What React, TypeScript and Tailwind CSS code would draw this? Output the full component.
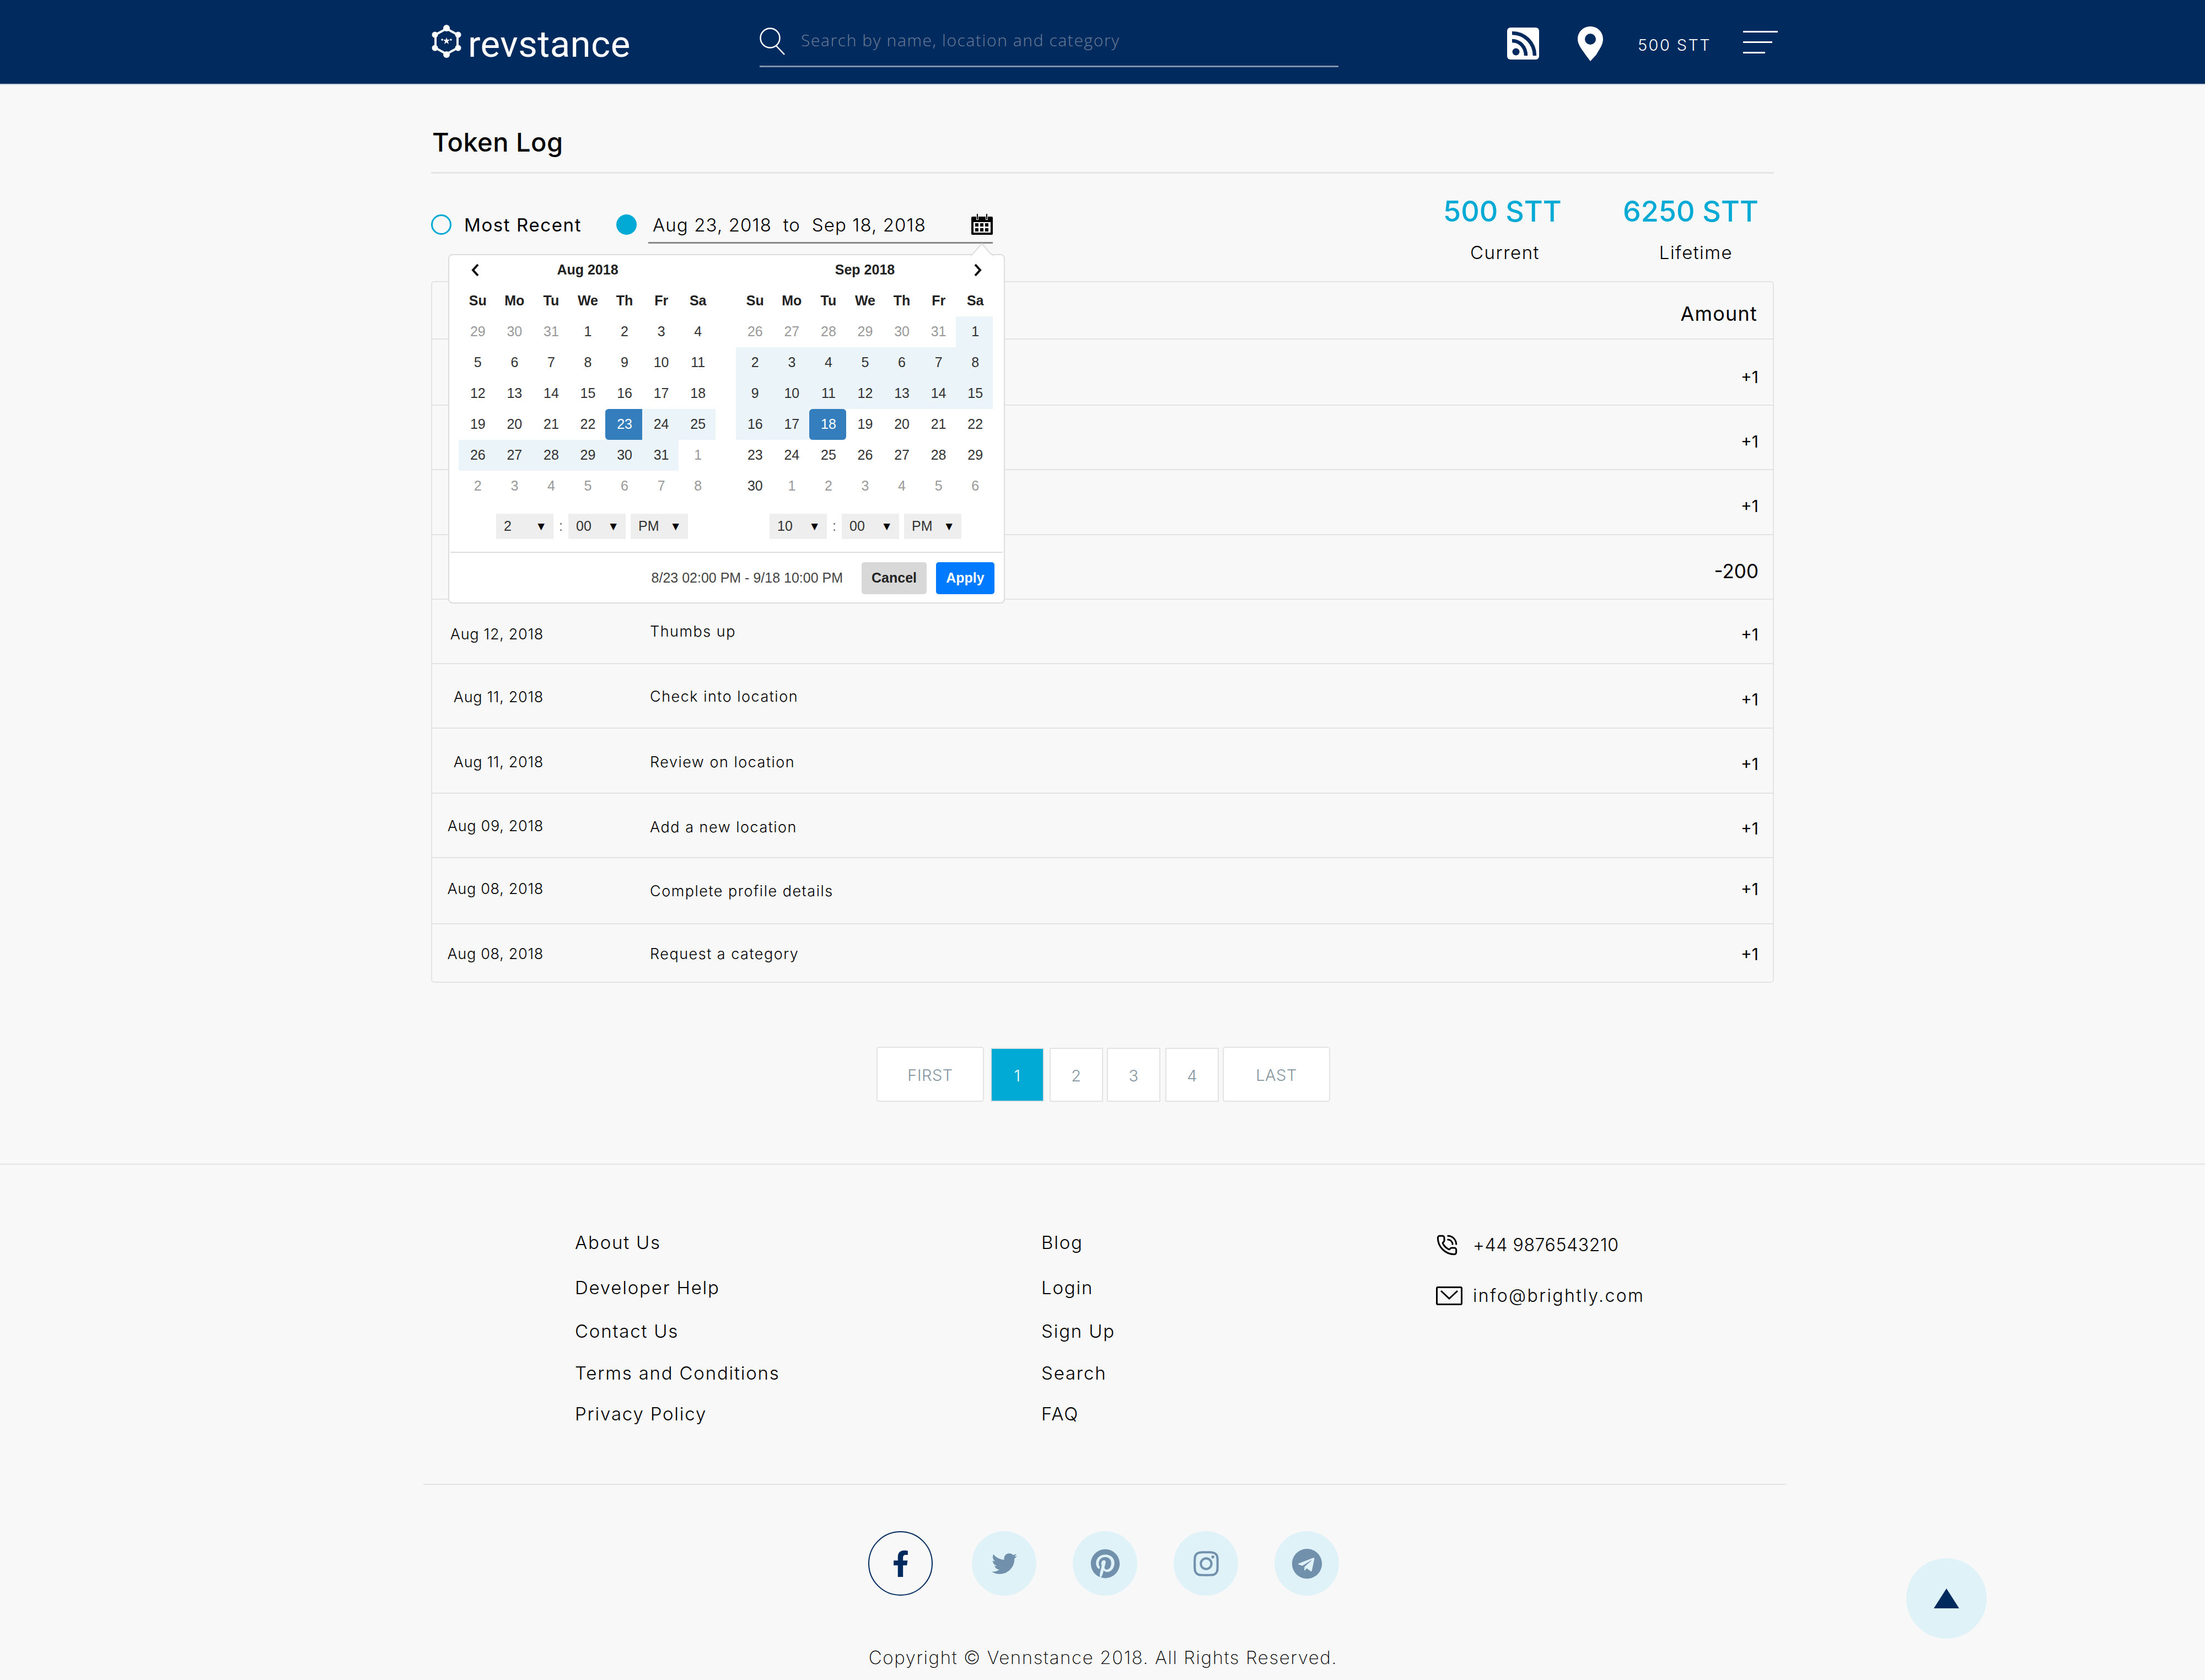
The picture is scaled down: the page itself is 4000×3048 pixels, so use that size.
import React from "react";
import { FaFacebookF, FaTwitter, FaPinterest, FaInstagram, FaTelegram } from "react-icons/fa";
import { PhoneCall } from "lucide-react";

const augDays = [
  [29, 30, 31, 1, 2, 3, 4],
  [5, 6, 7, 8, 9, 10, 11],
  [12, 13, 14, 15, 16, 17, 18],
  [19, 20, 21, 22, 23, 24, 25],
  [26, 27, 28, 29, 30, 31, 1],
  [2, 3, 4, 5, 6, 7, 8],
];

const sepDays = [
  [26, 27, 28, 29, 30, 31, 1],
  [2, 3, 4, 5, 6, 7, 8],
  [9, 10, 11, 12, 13, 14, 15],
  [16, 17, 18, 19, 20, 21, 22],
  [23, 24, 25, 26, 27, 28, 29],
  [30, 1, 2, 3, 4, 5, 6],
];

const weekDays = ["Su", "Mo", "Tu", "We", "Th", "Fr", "Sa"];

const rows = [
  { h: "h-[120px]", date: "", desc: "", amount: "+1", amountClass: "pt-[48px]" },
  { h: "h-[117px]", date: "", desc: "", amount: "+1", amountClass: "pt-[45px]" },
  { h: "h-[118px]", date: "", desc: "", amount: "+1", amountClass: "pt-[45px]" },
  { h: "h-[117px]", date: "", desc: "", amount: "-200", amountClass: "pt-[45px] text-[35px]" },
  { h: "h-[117px]", date: "Aug 12, 2018", dateClass: "pt-[43px]", desc: "Thumbs up", descClass: "pt-[38px]", amount: "+1", amountClass: "pt-[43px]" },
  { h: "h-[117px]", date: "Aug 11, 2018", dateClass: "pt-[40px]", desc: "Check into location", descClass: "pt-[39px]", amount: "+1", amountClass: "pt-[44px]" },
  { h: "h-[118px]", date: "Aug 11, 2018", dateClass: "pt-[41px]", desc: "Review on location", descClass: "pt-[41px]", amount: "+1", amountClass: "pt-[44px]" },
  { h: "h-[117px]", date: "Aug 09, 2018", dateClass: "pt-[39px]", desc: "Add a new location", descClass: "pt-[41px]", amount: "+1", amountClass: "pt-[43px]" },
  { h: "h-[120px]", date: "Aug 08, 2018", dateClass: "pt-[36px]", desc: "Complete profile details", descClass: "pt-[40px]", amount: "+1", amountClass: "pt-[36px]" },
  { h: "h-[106px]", date: "Aug 08, 2018", dateClass: "pt-[34px]", desc: "Request a category", descClass: "pt-[34px]", amount: "+1", amountClass: "pt-[34px]" },
];

const footerLeft = [
  { label: "About Us", h: "h-[82px]" },
  { label: "Developer Help", h: "h-[79px]" },
  { label: "Contact Us", h: "h-[76px]" },
  { label: "Terms and Conditions", h: "h-[74px]" },
  { label: "Privacy Policy", h: "h-[74px]" },
];

const footerRight = [
  { label: "Blog", h: "h-[82px]" },
  { label: "Login", h: "h-[79px]" },
  { label: "Sign Up", h: "h-[76px]" },
  { label: "Search", h: "h-[74px]" },
  { label: "FAQ", h: "h-[74px]" },
];

const Logo = () => (
  <svg width="54" height="60" viewBox="0 0 54 60" className="shrink-0">
    <polygon points="27,7 47,18 47,42 27,53 7,42 7,18" fill="none" stroke="#fff" strokeWidth="4" />
    <circle cx="27" cy="6" r="6" fill="#fff" />
    <circle cx="27" cy="54" r="6" fill="#fff" />
    <circle cx="6" cy="18" r="5.5" fill="#fff" />
    <circle cx="48" cy="18" r="5.5" fill="#fff" />
    <circle cx="6" cy="42" r="5.5" fill="#fff" />
    <circle cx="48" cy="42" r="5.5" fill="#fff" />
    <polygon points="27,23 28.5,27 33,27 29.5,30 31,35 27,32 23,35 24.5,30 21,27 25.5,27" fill="#fff" />
    <circle cx="19" cy="27" r="1.8" fill="#fff" />
    <circle cx="35" cy="27" r="1.8" fill="#fff" />
  </svg>
);

const RssIcon = () => (
  <svg width="58" height="58" viewBox="0 0 58 58">
    <rect width="58" height="58" rx="6" fill="#fff" />
    <circle cx="16" cy="44" r="6.5" fill="#012a5e" />
    <path d="M9 24c14 0 25 11 25 27" fill="none" stroke="#012a5e" strokeWidth="6.5" />
    <path d="M9 10c23 0 41 18 41 41" fill="none" stroke="#012a5e" strokeWidth="6.5" />
  </svg>
);

const PinIcon = () => (
  <svg width="46" height="63" viewBox="0 0 46 63">
    <path
      fillRule="evenodd"
      d="M23 0c13 0 23 10 23 23 0 10-7 19-12 28L23 63 14 51C8 42 0 33 0 23 0 10 10 0 23 0zm0 13a10 10 0 1 0 0 20 10 10 0 0 0 0-20z"
      fill="#fff"
    />
  </svg>
);

const CalendarIcon = () => (
  <svg width="39" height="38" viewBox="0 0 39 38">
    <rect x="0" y="5" width="39" height="33" rx="2" fill="#000" />
    <rect x="9" y="0" width="4" height="11" fill="#f8f8f8" />
    <rect x="26" y="0" width="4" height="11" fill="#f8f8f8" />
    <rect x="10" y="0" width="2" height="10" fill="#000" />
    <rect x="27" y="0" width="2" height="10" fill="#000" />
    <rect x="4" y="15" width="31" height="19" fill="#fff" />
    <rect x="7" y="17" width="6" height="6" fill="#000" />
    <rect x="16" y="17" width="6" height="6" fill="#000" />
    <rect x="25" y="17" width="6" height="6" fill="#000" />
    <rect x="7" y="26" width="6" height="6" fill="#000" />
    <rect x="16" y="26" width="6" height="6" fill="#000" />
    <rect x="25" y="26" width="6" height="6" fill="#000" />
  </svg>
);

const MailIcon = () => (
  <svg width="48" height="34" viewBox="0 0 48 34">
    <rect x="1.5" y="1.5" width="45" height="31" rx="2" fill="none" stroke="#000" strokeWidth="3" />
    <path d="M9 8l15 14L39 8" fill="none" stroke="#000" strokeWidth="3" />
  </svg>
);

const Calendar: React.FC<{
  days: number[][];
  isOff: (row: number, col: number) => boolean;
  isRange: (row: number, col: number) => boolean;
  activeCell: [number, number];
  activeClass: string;
}> = ({ days, isOff, isRange, activeCell, activeClass }) => (
  <div className="w-[466px]">
    <div className="grid grid-cols-7 h-[56px] items-center text-center font-bold text-[25px] text-[#222]">
      {weekDays.map((d) => (
        <div key={d} className="pl-[3px]">{d}</div>
      ))}
    </div>
    {days.map((week, r) => (
      <div key={r} className="grid grid-cols-7 h-[56px] text-center text-[25px]">
        {week.map((day, c) => {
          const active = activeCell[0] === r && activeCell[1] === c;
          let cls = "text-[#333]";
          if (isOff(r, c)) cls = "text-[#999]";
          if (isRange(r, c)) cls = "bg-[#ebf4f8] text-[#333]";
          if (active) cls = `bg-[#357ebd] text-white ${activeClass}`;
          return (
            <div key={c} className={`flex items-center justify-center pl-[3px] ${cls}`}>
              {day}
            </div>
          );
        })}
      </div>
    ))}
  </div>
);

const TimeSelect: React.FC<{ value: string }> = ({ value }) => (
  <div className="w-[104px] h-[46px] bg-[#eee] flex items-center justify-between pl-[14px] pr-[12px] text-[25px] text-[#333]">
    <span>{value}</span>
    <span className="text-[21px] text-black">▼</span>
  </div>
);

const TimePicker: React.FC<{ hour: string }> = ({ hour }) => (
  <div className="flex items-center">
    <TimeSelect value={hour} />
    <span className="w-[27px] text-center text-[25px] text-[#666]">:</span>
    <TimeSelect value="00" />
    <div className="w-[9px]" />
    <TimeSelect value="PM" />
  </div>
);

const DatePopup = () => (
  <div
    className="absolute left-[31px] top-[146px] w-[1010px] h-[634px] bg-white border-2 border-[#ddd] rounded-[8px] z-10 text-[#333]"
    style={{ fontFamily: '"Liberation Sans", Arial, sans-serif' }}
  >
    <svg width="44" height="24" viewBox="0 0 44 24" className="absolute right-[18px] -top-[22px]">
      <path d="M2 24L22 1l20 23" fill="#fff" stroke="#ddd" strokeWidth="2" />
      <rect x="3" y="22" width="38" height="3" fill="#fff" />
    </svg>
    <div className="h-[55px] relative flex items-center font-bold text-[25px] text-[#222]">
      <svg width="18" height="26" viewBox="0 0 18 26" className="absolute left-[38px] top-[14px]">
        <path d="M14 3L5 13l9 10" fill="none" stroke="#111" strokeWidth="4" />
      </svg>
      <div className="absolute left-[18px] w-[466px] text-center -mt-[2px]">Aug 2018</div>
      <div className="absolute left-[521px] w-[466px] text-center -mt-[2px]">Sep 2018</div>
      <svg width="18" height="26" viewBox="0 0 18 26" className="absolute right-[38px] top-[14px]">
        <path d="M4 3l9 10-9 10" fill="none" stroke="#111" strokeWidth="4" />
      </svg>
    </div>
    <div className="flex gap-[37px] pl-[17px]">
      <Calendar
        days={augDays}
        isOff={(r, c) => r === 0 ? c < 3 : r === 5 || (r === 4 && c === 6)}
        isRange={(r, c) => (r === 3 && c > 4) || (r === 4 && c < 6)}
        activeCell={[3, 4]}
        activeClass="rounded-l-[6px]"
      />
      <Calendar
        days={sepDays}
        isOff={(r, c) => (r === 0 && c < 6) || (r === 5 && c > 0)}
        isRange={(r, c) => (r === 0 && c === 6) || r === 1 || r === 2 || (r === 3 && c < 2)}
        activeCell={[3, 2]}
        activeClass="rounded-[6px]"
      />
    </div>
    <div className="flex pt-[22px] h-[68px]">
      <div className="ml-[85px]">
        <TimePicker hour="2" />
      </div>
      <div className="ml-[148px]">
        <TimePicker hour="10" />
      </div>
    </div>
    <div className="border-t-2 border-[#ddd] mt-[23px] mx-[2px] flex items-center justify-end h-[90px] pt-[4px] pr-[15px] text-[25px]">
      <span className="text-[#444] mr-[34px]">8/23 02:00 PM - 9/18 10:00 PM</span>
      <div className="w-[118px] h-[58px] bg-[#d8d8d8] rounded-[5px] flex items-center justify-center font-bold text-[#222] mr-[17px]">
        Cancel
      </div>
      <div className="w-[106px] h-[58px] bg-[#007bff] rounded-[5px] flex items-center justify-center font-bold text-white">
        Apply
      </div>
    </div>
  </div>
);

const App: React.FC = () => {
  return (
    <div
      className="relative w-[4000px] h-[3048px] bg-[#f8f8f8] text-black overflow-hidden"
      style={{ fontFamily: 'Inter, "Open Sans", sans-serif' }}
    >
      <header className="h-[154px] bg-[#012a5e] border-b-2 border-[#c9d3e0]">
        <div className="w-[2434px] mx-auto flex items-start h-full text-white">
          <div className="flex items-start w-[595px] shrink-0 pt-[45px] gap-[12px]">
            <Logo />
            <span className="text-[67px] leading-[60px] font-normal pt-[5px] tracking-[0.5px]" style={{ fontFamily: "Roboto, sans-serif" }}>
              revstance
            </span>
          </div>
          <div className="w-[1050px] h-[122px] border-b-[3px] border-[#7f93ae] flex items-start pt-[50px] gap-[27px] shrink-0">
            <svg width="48" height="50" viewBox="0 0 48 50" className="shrink-0">
              <circle cx="19" cy="19" r="17.5" fill="none" stroke="#fff" strokeWidth="2.5" />
              <path d="M30 33l15 16" fill="none" stroke="#fff" strokeWidth="2.5" />
            </svg>
            <span className="text-[30px] leading-[50px] text-[#6d7f99] font-light tracking-[1.6px] -mt-[2px]" style={{ fontFamily: '"Open Sans", sans-serif' }}>
              Search by name, location and category
            </span>
          </div>
          <div className="ml-[306px] pt-[50px] shrink-0">
            <RssIcon />
          </div>
          <div className="ml-[70px] pt-[48px] shrink-0">
            <PinIcon />
          </div>
          <div className="ml-[63px] pt-[64px] text-[29px] leading-[36px] font-light tracking-[2.4px] w-[191px] shrink-0">500 STT</div>
          <div className="pt-[56px] flex flex-col gap-[16px] w-[63px] shrink-0">
            <div className="h-[3px] w-[63px] bg-white" />
            <div className="h-[3px] w-[53px] bg-white" />
            <div className="h-[3px] w-[40px] bg-white" />
          </div>
        </div>
      </header>

      <main className="w-[2436px] mx-auto">
        <div className="h-[161px] border-b-[3px] border-[#e5e5e5] pt-[76px] pl-[2px] text-[47px] leading-[56px] font-medium tracking-[0.5px]">
          Token Log
        </div>

        <div className="relative h-[195px] flex justify-between items-start">
          <div className="flex items-start pt-[74px] text-[33px] leading-[40px]">
            <div className="w-[37px] h-[37px] rounded-full border-[3px] border-[#00aad5]" />
            <span className="ml-[23px] -mt-[1px] font-normal tracking-[1.6px] w-[276px]">Most Recent</span>
            <div className="w-[37px] h-[37px] rounded-full bg-[#00aad5]" />
            <div className="relative ml-[21px] -mt-[1px] w-[625px] h-[54px] border-b-[3px] border-[#888] pl-[8px] font-light tracking-[1.1px] flex items-start justify-between">
              <span className="whitespace-pre">Aug 23, 2018  to  Sep 18, 2018</span>
              <CalendarIcon />
            </div>
          </div>
          <div className="flex pt-[41px] pr-[31px] gap-[114px]">
            <div className="w-[212px] text-center">
              <div className="text-[52px] leading-[56px] font-medium text-[#00aad5] whitespace-nowrap">500 STT</div>
              <div className="text-[33px] leading-[40px] mt-[26px] font-light pl-[12px] tracking-[1.5px]">Current</div>
            </div>
            <div className="w-[243px] text-center">
              <div className="text-[52px] leading-[56px] font-medium text-[#00aad5] whitespace-nowrap">6250 STT</div>
              <div className="text-[33px] leading-[40px] mt-[26px] font-light pl-[22px] tracking-[1.5px]">Lifetime</div>
            </div>
          </div>
          <DatePopup />
        </div>

        <div className="border-2 border-[#e3e3e3] rounded-[6px] text-[27px] leading-[40px] font-light">
          <div className="h-[102px] flex justify-end items-start pt-[37px] pr-[28px] text-[36px] font-normal tracking-[1.2px]">Amount</div>
          {rows.map((row, i) => (
            <div key={i} className={`flex border-t-2 border-[#e3e3e3] ${row.h}`}>
              <div className={`w-[202px] text-right whitespace-nowrap tracking-[0.7px] ${row.dateClass ?? ""}`}>{row.date}</div>
              <div className={`ml-[193px] flex-1 tracking-[1.5px] ${row.descClass ?? ""}`}>{row.desc}</div>
              <div className={`pr-[26px] text-[30px] font-normal ${row.amountClass}`}>{row.amount}</div>
            </div>
          ))}
        </div>

        <div className="flex justify-start items-start mt-[116px] ml-[808px] text-[29px] font-light text-[#84969f] tracking-[0.5px]">
          <div className="w-[195px] h-[100px] pt-[4px] bg-white border-2 border-[#e3e3e3] rounded-[5px] flex items-center justify-center">FIRST</div>
          <div className="ml-[12px] mt-[2px] pt-[4px] w-[97px] h-[98px] bg-[#00aad5] border-2 border-[#e3e3e3] text-white flex items-center justify-center">1</div>
          <div className="ml-[10px] mt-[2px] pt-[4px] w-[97px] h-[98px] bg-white border-2 border-[#e3e3e3] flex items-center justify-center">2</div>
          <div className="ml-[7px] mt-[2px] pt-[4px] w-[97px] h-[98px] bg-white border-2 border-[#e3e3e3] flex items-center justify-center">3</div>
          <div className="ml-[9px] mt-[2px] pt-[4px] w-[97px] h-[98px] bg-white border-2 border-[#e3e3e3] flex items-center justify-center">4</div>
          <div className="ml-[7px] w-[195px] h-[100px] pt-[4px] bg-white border-2 border-[#e3e3e3] rounded-[5px] flex items-center justify-center">LAST</div>
        </div>
      </main>

      <footer className="mt-[112px] border-t-2 border-[#e3e3e3]">
        <div className="w-[2472px] ml-[768px] h-[581px] border-b-2 border-[#e3e3e3] flex pt-[119px] text-[33px] font-light tracking-[1.8px]">
          <div className="ml-[275px] w-[846px]">
            {footerLeft.map((link) => (
              <div key={link.label} className={`${link.h} leading-[44px]`}>{link.label}</div>
            ))}
          </div>
          <div className="w-[716px]">
            {footerRight.map((link) => (
              <div key={link.label} className={`${link.h} leading-[44px]`}>{link.label}</div>
            ))}
          </div>
          <div className="flex flex-col pt-[5px] text-[32px]">
            <div className="flex items-center h-[44px] gap-[27px] tracking-[0.6px]">
              <PhoneCall size={40} strokeWidth={1.8} color="#000" className="w-[40px] shrink-0" />
              <span>+44 9876543210</span>
            </div>
            <div className="flex items-center h-[44px] mt-[48px] gap-[19px] tracking-[2.4px]">
              <MailIcon />
              <span>info@brightly.com</span>
            </div>
          </div>
        </div>
        <div className="flex gap-[66px] pt-[84px] pl-[1575px]">
          <div className="w-[117px] h-[117px] mr-[5px] rounded-full border-2 border-[#012a5e] flex items-center justify-center">
            <FaFacebookF size={48} color="#012a5e" />
          </div>
          <div className="w-[117px] h-[117px] rounded-full bg-[#dff2f7] flex items-center justify-center">
            <FaTwitter size={46} color="#7090ac" />
          </div>
          <div className="w-[117px] h-[117px] rounded-full bg-[#dff2f7] flex items-center justify-center">
            <FaPinterest size={54} color="#7090ac" />
          </div>
          <div className="w-[117px] h-[117px] rounded-full bg-[#dff2f7] flex items-center justify-center">
            <FaInstagram size={52} color="#7090ac" />
          </div>
          <div className="w-[117px] h-[117px] rounded-full bg-[#dff2f7] flex items-center justify-center">
            <FaTelegram size={56} color="#7090ac" />
          </div>
        </div>
        <div className="text-center text-[33px] leading-[44px] font-extralight mt-[90px] pl-[2px] tracking-[1.6px]">
          Copyright © Vennstance 2018. All Rights Reserved.
        </div>
      </footer>

      <div className="absolute left-[3458px] top-[2827px] w-[146px] h-[146px] rounded-full bg-[#dff2f7] flex items-center justify-center">
        <svg width="46" height="36" viewBox="0 0 46 36">
          <polygon points="23,0 46,36 0,36" fill="#012a5e" />
        </svg>
      </div>
    </div>
  );
};

export default App;
